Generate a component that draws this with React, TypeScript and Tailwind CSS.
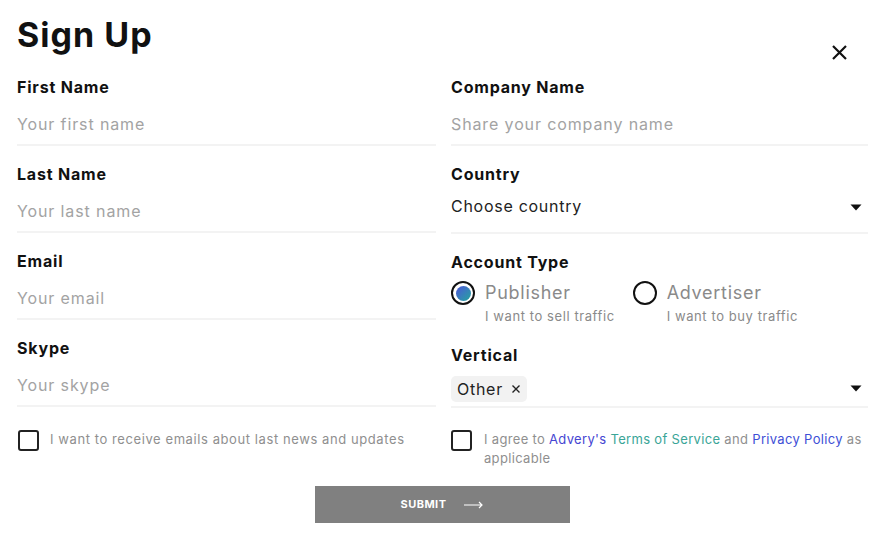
import { useState } from 'react';

const font = { fontFamily: 'Inter, "Liberation Sans", sans-serif' };

function TextField({ label, placeholder }: { label: string; placeholder: string }) {
  return (
    <div className="flex flex-col">
      <label className="text-[16px] leading-5 font-bold text-[#111] tracking-[0.05em]">{label}</label>
      <input
        placeholder={placeholder}
        className="mt-[7px] h-[42px] w-full border-b-2 border-[#f3f3f3] bg-transparent text-[16px] text-[#111] placeholder:text-[#a3a3a3] outline-none tracking-[0.055em]"
      />
    </div>
  );
}

function Caret() {
  return (
    <svg width="12" height="7" viewBox="0 0 12 7" className="shrink-0">
      <path d="M0.5 0.5h11L6 6.5z" fill="#111" />
    </svg>
  );
}

function Checkbox({ onChange }: { onChange: () => void }) {
  return (
    <button
      onClick={onChange}
      className="w-[21px] h-[21px] shrink-0 rounded-[3px] border-2 border-[#222] bg-white"
    />
  );
}

export default function App() {
  const [account, setAccount] = useState<'publisher' | 'advertiser'>('publisher');
  const [news, setNews] = useState(false);
  const [agree, setAgree] = useState(false);

  const radio = (value: 'publisher' | 'advertiser', title: string, sub: string) => (
    <button onClick={() => setAccount(value)} className="flex items-start gap-[10px] text-left">
      <span className="mt-[1px] w-[24px] h-[24px] rounded-full border-2 border-[#111] flex items-center justify-center">
        {account === value && (
          <span className="w-[15px] h-[15px] rounded-full bg-gradient-to-br from-[#4a4fd8] to-[#1fa39a]" />
        )}
      </span>
      <span className="flex flex-col">
        <span className="text-[18px] leading-[26px] text-[#8a8a8a] tracking-[0.04em]">{title}</span>
        <span className="text-[13px] leading-4 text-[#8a8a8a] mt-[2px] tracking-[0.045em]">{sub}</span>
      </span>
    </button>
  );

  return (
    <div className="w-[888px] h-[537px] bg-white relative" style={font}>
      <div className="pl-[17px] pr-[20px]">
        <h1 className="pt-[14px] text-[34px] leading-[42px] font-bold text-[#111] tracking-[0.03em]">Sign Up</h1>
        <button className="absolute right-[40px] top-[44px] text-[#111]">
          <svg width="17" height="17" viewBox="0 0 17 17">
            <path d="M2 2l13 13M15 2L2 15" stroke="#111" strokeWidth="2.2" />
          </svg>
        </button>

        <div className="mt-[21px] grid grid-cols-[419px_417px] gap-x-[15px]">
          <div className="flex flex-col gap-y-[18px]">
            <TextField label="First Name" placeholder="Your first name" />
            <TextField label="Last Name" placeholder="Your last name" />
            <TextField label="Email" placeholder="Your email" />
            <TextField label="Skype" placeholder="Your skype" />
          </div>

          <div className="flex flex-col">
            <TextField label="Company Name" placeholder="Share your company name" />

            <div className="mt-[18px] flex flex-col">
              <label className="text-[16px] leading-5 font-bold text-[#111] tracking-[0.05em]">Country</label>
              <div className="h-[50px] border-b-2 border-[#f3f3f3] flex items-start justify-between pr-[6px]">
                <span className="mt-[10px] text-[16px] text-[#222] tracking-[0.045em]">Choose country</span>
                <span className="mt-[20px]"><Caret /></span>
              </div>
            </div>

            <div className="mt-[18px] flex flex-col">
              <label className="text-[16px] leading-5 font-bold text-[#111] tracking-[0.05em]">Account Type</label>
              <div className="mt-[8px] flex gap-[18px]">
                {radio('publisher', 'Publisher', 'I want to sell traffic')}
                {radio('advertiser', 'Advertiser', 'I want to buy traffic')}
              </div>
            </div>

            <div className="mt-[21px] flex flex-col">
              <label className="text-[16px] leading-5 font-bold text-[#111] tracking-[0.05em]">Vertical</label>
              <div className="h-[43px] border-b-2 border-[#f3f3f3] flex items-start justify-between pr-[6px]">
                <span className="mt-[11px] h-[26px] rounded-[5px] bg-[#f2f2f2] px-[6px] flex items-center gap-[8px] text-[16px] text-[#222] tracking-[0.045em]">
                  Other
                  <svg width="10" height="10" viewBox="0 0 10 10">
                    <path d="M1.5 1.5l7 7M8.5 1.5l-7 7" stroke="#222" strokeWidth="1.4" />
                  </svg>
                </span>
                <span className="mt-[20px]"><Caret /></span>
              </div>
            </div>
          </div>
        </div>

        <div className="mt-[22px] grid grid-cols-[419px_417px] gap-x-[15px]">
          <div className="flex items-start gap-[11px] pl-[1px]">
            <Checkbox onChange={() => setNews(!news)} />
            <span className="text-[13px] leading-[19px] text-[#8f8f8f] tracking-[0.045em]">
              I want to receive emails about last news and updates
            </span>
          </div>
          <div className="flex items-start gap-[12px]">
            <Checkbox onChange={() => setAgree(!agree)} />
            <p className="text-[13px] leading-[19px] text-[#8f8f8f] tracking-[0.025em] whitespace-nowrap">
              I agree to <span className="text-[#4646d2]">Advery's</span>{' '}
              <span className="text-[#3aa597]">Terms of Service</span> and{' '}
              <span className="text-[#3e4fd6]">Privacy Policy</span> as
              <br />
              applicable
            </p>
          </div>
        </div>

        <div className="mt-[18px] flex justify-center">
          <button className="w-[255px] h-[37px] bg-[#808080] text-white flex items-center justify-center gap-[18px]">
            <span className="text-[11px] font-bold tracking-[0.04em]">SUBMIT</span>
            <svg width="20" height="8" viewBox="0 0 20 8">
              <path d="M0 4h18M15 1l3 3-3 3" stroke="#fff" strokeWidth="1.2" fill="none" />
            </svg>
          </button>
        </div>
      </div>
    </div>
  );
}
